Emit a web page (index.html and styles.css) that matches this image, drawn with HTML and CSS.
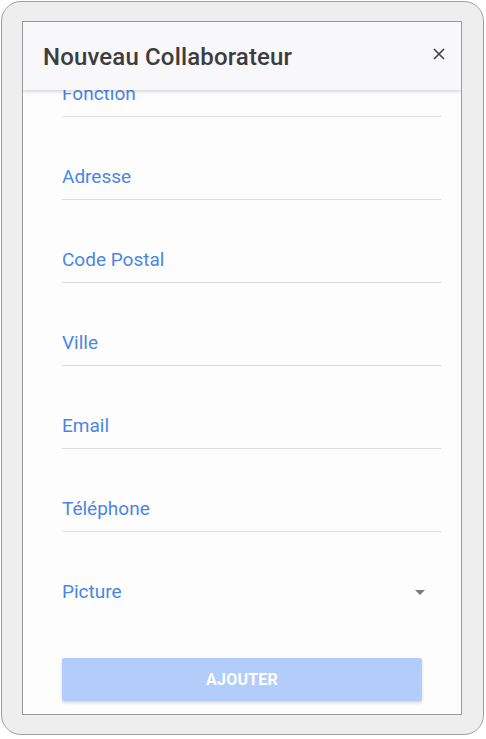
FILE: index.html
```html
<!DOCTYPE html>
<html lang="fr">
<head>
<meta charset="utf-8">
<link rel="stylesheet" href="styles.css">
</head>
<body>
<div class="frame">
  <div class="dialog">
    <div class="header">
      <h1 class="title">Nouveau Collaborateur</h1>
      <button class="close" aria-label="Fermer">
        <svg width="12" height="12" viewBox="0 0 12 12"><path d="M1 1L11 11M11 1L1 11" stroke="#444" stroke-width="1.6" fill="none"/></svg>
      </button>
    </div>
    <div class="body">
      <div class="fields">
        <div class="field"><span class="label">Fonction</span></div>
        <div class="field"><span class="label">Adresse</span></div>
        <div class="field"><span class="label">Code Postal</span></div>
        <div class="field"><span class="label">Ville</span></div>
        <div class="field"><span class="label">Email</span></div>
        <div class="field"><span class="label">Téléphone</span></div>
        <div class="field select"><span class="label">Picture</span><span class="arrow"></span></div>
        <button class="submit">AJOUTER</button>
      </div>
    </div>
  </div>
</div>
</body>
</html>
```
FILE: styles.css
```css
* { box-sizing: border-box; }
html, body { margin: 0; padding: 0; background: #fff; }
body { font-family: Roboto, "Noto Sans", sans-serif; }
.frame {
  margin: 1px 0 0 1px;
  width: 483px;
  height: 734px;
  border: 1px solid #a0a0a0;
  border-radius: 20px;
  background: #eeeeee;
  padding: 19px 0 0 20px;
}
.dialog {
  width: 440px;
  height: 694px;
  border: 1px solid #9a9a9a;
  background: #fdfdfd;
  display: flex;
  flex-direction: column;
  overflow: hidden;
}
.header {
  position: relative;
  z-index: 2;
  height: 68px;
  flex: none;
  background: #f8f7f9;
  display: flex;
  align-items: center;
  justify-content: space-between;
  padding: 0 12px 0 20px;
  box-shadow: 0 2px 3px rgba(0,0,0,0.14);
}
.title {
  margin: 0;
  font-size: 24px;
  font-weight: 500;
  letter-spacing: 0.15px;
  color: #3d3c3e;
  padding-top: 1px;
}
.close {
  border: 0;
  background: transparent;
  padding: 4px;
  display: flex;
  margin-top: -4px;
}
.body {
  flex: 1;
  overflow: hidden;
  padding: 0 20px 0 39px;
}
.fields {
  margin-top: -56px;
  display: flex;
  flex-direction: column;
}
.field {
  height: 83px;
  padding-top: 48px;
  border-bottom: 1px solid #dcdcdc;
  display: flex;
  justify-content: space-between;
  align-items: flex-start;
}
.label {
  font-size: 19px;
  line-height: 24px;
  color: #4a86e6;
}
.select { border-bottom-color: transparent; }
.arrow {
  width: 0;
  height: 0;
  border-left: 5px solid transparent;
  border-right: 5px solid transparent;
  border-top: 5px solid #7a7a7a;
  margin: 10px 16px 0 0;
}
.submit {
  margin-top: 43px;
  width: 360px;
  height: 43px;
  border: 0;
  border-radius: 2px;
  background: #b3cdfb;
  color: #fff;
  font-family: Roboto, sans-serif;
  font-weight: 700;
  font-size: 16px;
  letter-spacing: 0.2px;
  box-shadow: 0 2px 3px rgba(0,0,0,0.15);
}
```
